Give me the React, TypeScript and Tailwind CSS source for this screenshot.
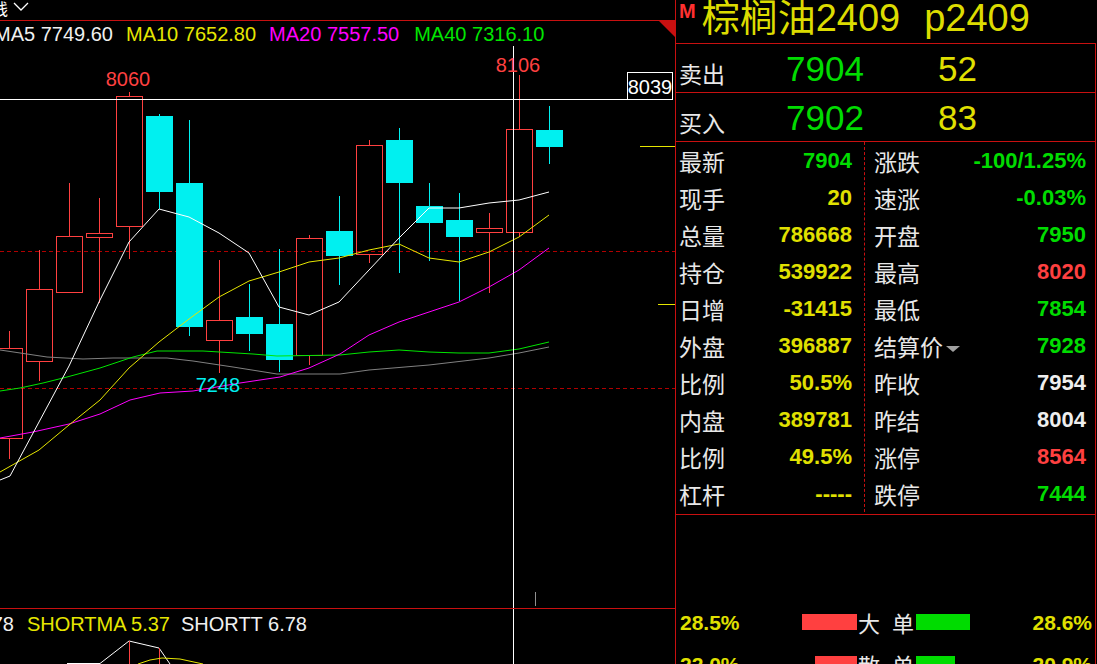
import React from 'react';

type Candle = { x: number; t: number; b: number; h: number; l: number; up: boolean };

const candles: Candle[] = [
  { x: 9, t: 348, b: 438, h: 331, l: 459, up: true },
  { x: 39, t: 289, b: 361, h: 250, l: 381, up: true },
  { x: 69, t: 236, b: 292, h: 183, l: 293, up: true },
  { x: 99, t: 233, b: 237, h: 198, l: 303, up: true },
  { x: 129, t: 96, b: 226, h: 92, l: 259, up: true },
  { x: 159, t: 116, b: 192, h: 114, l: 209, up: false },
  { x: 189, t: 183, b: 327, h: 120, l: 336, up: false },
  { x: 219, t: 320, b: 340, h: 260, l: 373, up: true },
  { x: 249, t: 317, b: 334, h: 284, l: 351, up: false },
  { x: 279, t: 324, b: 360, h: 249, l: 372, up: false },
  { x: 309, t: 238, b: 355, h: 235, l: 365, up: true },
  { x: 339, t: 231, b: 256, h: 196, l: 285, up: false },
  { x: 369, t: 145, b: 254, h: 140, l: 263, up: true },
  { x: 399, t: 140, b: 183, h: 128, l: 273, up: false },
  { x: 429, t: 206, b: 223, h: 183, l: 261, up: false },
  { x: 459, t: 220, b: 237, h: 193, l: 301, up: false },
  { x: 489, t: 228, b: 232, h: 213, l: 293, up: true },
  { x: 519, t: 129, b: 232, h: 75, l: 237, up: true },
  { x: 549, t: 130, b: 147, h: 106, l: 164, up: false },
];

const maLines = [
  { color: '#808080', pts: '0,350 27,354 47,357 83,359 113,358 167,358 193,361 233,367 277,374 340,374 369,370 429,365 489,358 519,353 549,347' },
  { color: '#00e600', pts: '0,391 20,388 43,383 67,377 100,368 133,357 157,351 203,351 253,354 277,356 340,355 369,352 399,350 429,352 459,353 489,353 519,349 549,342' },
  { color: '#ff00ff', pts: '0,438 33,432 69,424 100,414 130,400 160,393 193,391 240,383 280,377 309,368 340,354 369,335 399,322 429,312 459,302 489,287 519,270 549,248' },
  { color: '#e6e600', pts: '0,472 39,450 69,425 100,400 129,368 159,342 189,319 219,297 249,281 279,272 309,262 339,258 369,250 399,244 429,258 459,262 489,252 519,237 549,215' },
  { color: '#ffffff', pts: '0,480 10,476 39,422 69,366 99,302 129,242 159,209 189,217 219,233 249,253 279,307 309,315 339,302 369,270 399,238 429,208 459,208 489,203 519,200 549,192' },
];

const RED = '#ff4040';
const CYAN = '#00f0f0';
const FONT = 'Liberation Sans, Arial, sans-serif';

const tone = {
  g: 'text-[#00dc00]',
  y: 'text-[#e0e000]',
  r: 'text-[#ff4040]',
  w: 'text-[#eeeeee]',
};

type Row = { label: string; value: string; c: keyof typeof tone; arrow?: boolean };

const leftRows: Row[] = [
  { label: '最新', value: '7904', c: 'g' },
  { label: '现手', value: '20', c: 'y' },
  { label: '总量', value: '786668', c: 'y' },
  { label: '持仓', value: '539922', c: 'y' },
  { label: '日增', value: '-31415', c: 'y' },
  { label: '外盘', value: '396887', c: 'y' },
  { label: '比例', value: '50.5%', c: 'y' },
  { label: '内盘', value: '389781', c: 'y' },
  { label: '比例', value: '49.5%', c: 'y' },
  { label: '杠杆', value: '-----', c: 'y' },
];

const rightRows: Row[] = [
  { label: '涨跌', value: '-100/1.25%', c: 'g' },
  { label: '速涨', value: '-0.03%', c: 'g' },
  { label: '开盘', value: '7950', c: 'g' },
  { label: '最高', value: '8020', c: 'r' },
  { label: '最低', value: '7854', c: 'g' },
  { label: '结算价', value: '7928', c: 'g', arrow: true },
  { label: '昨收', value: '7954', c: 'w' },
  { label: '昨结', value: '8004', c: 'w' },
  { label: '涨停', value: '8564', c: 'r' },
  { label: '跌停', value: '7444', c: 'g' },
];

const flows = [
  { left: '28.5%', right: '28.6%', label: ['大', '单'], red: 55, green: 54 },
  { left: '22.0%', right: '20.9%', label: ['散', '单'], red: 42, green: 39 },
];

function CandleChart() {
  return (
    <svg width={675} height={587} viewBox="0 21 675 587" className="block">
      <line x1={0} y1={251.5} x2={675} y2={251.5} stroke="#b00000" strokeDasharray="4 3" />
      <line x1={0} y1={388.5} x2={675} y2={388.5} stroke="#b00000" strokeDasharray="4 3" />
      <line x1={640} y1={146.5} x2={675} y2={146.5} stroke="#e6e600" />
      <line x1={658} y1={304.5} x2={675} y2={304.5} stroke="#e6e600" />
      {candles.map((c) =>
        c.up ? (
          <g key={c.x} stroke={RED} shapeRendering="crispEdges">
            <line x1={c.x + 0.5} y1={c.h} x2={c.x + 0.5} y2={c.t} />
            <line x1={c.x + 0.5} y1={c.b} x2={c.x + 0.5} y2={c.l} />
            <rect x={c.x - 12.5} y={c.t + 0.5} width={26} height={Math.max(c.b - c.t, 2)} fill="none" />
          </g>
        ) : (
          <g key={c.x} shapeRendering="crispEdges">
            <line x1={c.x + 0.5} y1={c.h} x2={c.x + 0.5} y2={c.l} stroke={CYAN} />
            <rect x={c.x - 13} y={c.t} width={27} height={c.b - c.t} fill={CYAN} />
          </g>
        )
      )}
      {maLines.map((m) => (
        <polyline key={m.color} points={m.pts} fill="none" stroke={m.color} strokeWidth={1} />
      ))}
      <line x1={513.5} y1={46} x2={513.5} y2={608} stroke="#ffffff" />
      <line x1={0} y1={99.5} x2={627} y2={99.5} stroke="#ffffff" />
      <rect x={627.5} y={72.5} width={45} height={27} fill="#000" stroke="#ffffff" />
      <text x={650} y={94} fill="#ffffff" fontSize={20} fontFamily={FONT} textAnchor="middle">
        8039
      </text>
      <text x={128} y={86} fill={RED} fontSize={20} fontFamily={FONT} textAnchor="middle">
        8060
      </text>
      <text x={518} y={72} fill={RED} fontSize={20} fontFamily={FONT} textAnchor="middle">
        8106
      </text>
      <text x={218} y={392} fill={CYAN} fontSize={20} fontFamily={FONT} textAnchor="middle">
        7248
      </text>
      <polygon points="659,21 675,21 675,37" fill="#c81010" />
      <line x1={535.5} y1={592} x2={535.5} y2={606} stroke="#909090" />
    </svg>
  );
}

function IndicatorLines() {
  return (
    <svg width={675} height={55} viewBox="0 609 675 55" className="absolute inset-0">
      <line x1={513.5} y1={609} x2={513.5} y2={664} stroke="#ffffff" />
      <polyline points="67,663.5 100,663.5 129,641 159,648 170,664" fill="none" stroke="#ffffff" />
      <line x1={129.5} y1={641} x2={129.5} y2={664} stroke={RED} />
      <line x1={159.5} y1={648} x2={159.5} y2={664} stroke={RED} />
      <polyline points="138,664 150,660 162,658 180,659 203,664" fill="none" stroke="#e6e600" />
    </svg>
  );
}

function InfoRow({ row, first }: { row: Row; first?: boolean }) {
  return (
    <div className={`flex h-[37px] items-center justify-between ${first ? 'pl-[3px] pr-[12px]' : 'pl-[9px] pr-[9px]'}`}>
      <span className="flex items-center pt-[2px] font-['Noto_Sans_CJK_SC',sans-serif] text-[23px] leading-[23px] text-[#e8e8e8]">
        {row.label}
        {row.arrow && (
          <svg width={16} height={8} viewBox="0 0 16 8" className="ml-[2px] mt-[4px]">
            <polygon points="1,1 15,1 8,7" fill="#a0a0a0" />
          </svg>
        )}
      </span>
      <span className={`font-['Liberation_Sans',Arial,sans-serif] text-[22px] font-bold leading-[22px] ${tone[row.c]}`}>
        {row.value}
      </span>
    </div>
  );
}

export default function App() {
  return (
    <div className="flex h-[664px] w-[1097px] overflow-hidden bg-black font-['Liberation_Sans',Arial,sans-serif]">
      {/* chart side */}
      <div className="flex w-[676px] shrink-0 flex-col overflow-hidden border-r border-[#c81010]">
        <div className="flex h-[21px] shrink-0 items-start border-b border-[#c81010]">
          <span className="ml-[-8px] font-['Noto_Sans_CJK_SC',sans-serif] text-[16px] leading-[16px] text-white">线</span>
          <svg width={16} height={10} viewBox="0 0 16 10" className="ml-[5px] mt-[2px]">
            <polyline points="1,1 8,8 15,1" fill="none" stroke="#ffffff" strokeWidth={1.3} />
          </svg>
        </div>

        <div className="relative h-[587px] shrink-0">
          <CandleChart />
          <div className="absolute left-[-6px] top-[3px] flex gap-[13px] whitespace-nowrap text-[20px] leading-[20px]">
            <span className="text-[#f0f0f0]">MA5 7749.60</span>
            <span className="text-[#e6e600]">MA10 7652.80</span>
            <span className="text-[#ff00ff]">MA20 7557.50</span>
            <span className="ml-[2px] text-[#00e600]">MA40 7316.10</span>
          </div>
        </div>

        <div className="relative flex-1 border-t border-[#c81010]">
          <IndicatorLines />
          <div className="relative flex whitespace-nowrap pt-[5px] text-[20px] leading-[20px]">
            <span className="ml-[-25px] text-[#f0f0f0]">6.78</span>
            <span className="ml-[13px] text-[#e6e600]">SHORTMA 5.37</span>
            <span className="ml-[11px] text-[#f0f0f0]">SHORTT 6.78</span>
          </div>
        </div>
      </div>

      {/* quote side */}
      <div className="flex w-[421px] flex-col">
        <div className="flex h-[43px] shrink-0 items-start whitespace-nowrap font-['Liberation_Sans','Noto_Sans_CJK_SC',sans-serif] text-[#dcdc00]">
          <span className="ml-[3px] mt-[1px] text-[20px] font-bold leading-[20px] text-[#ff3030]">M</span>
          <span className="ml-[6px] mt-[-2px] text-[38px] leading-[40px]">棕榈油2409</span>
          <span className="ml-[24px] mt-[-2px] text-[38px] leading-[40px]">p2409</span>
        </div>

        <div className="flex w-[420px] flex-1 flex-col border-r border-t border-[#c81010]">
          <div className="flex h-[48px] items-center">
            <span className="w-[110px] pl-[3px] pt-[10px] font-['Noto_Sans_CJK_SC',sans-serif] text-[23px] leading-[23px] text-[#e8e8e8]">卖出</span>
            <span className="w-[152px] text-[35px] leading-[35px] text-[#00dc00]">7904</span>
            <span className="text-[35px] leading-[35px] text-[#e0e000]">52</span>
          </div>
          <div className="flex h-[49px] items-center border-t border-[#c81010]">
            <span className="w-[110px] pl-[3px] pt-[10px] font-['Noto_Sans_CJK_SC',sans-serif] text-[23px] leading-[23px] text-[#e8e8e8]">买入</span>
            <span className="w-[152px] text-[35px] leading-[35px] text-[#00dc00]">7902</span>
            <span className="text-[35px] leading-[35px] text-[#e0e000]">83</span>
          </div>

          <div className="flex h-[374px] border-y border-[#c81010] pb-[2px]">
            <div className="w-[189px] border-r border-dashed border-[#c81010]">
              {leftRows.map((r, i) => (
                <InfoRow key={i} row={r} first />
              ))}
            </div>
            <div className="flex-1">
              {rightRows.map((r, i) => (
                <InfoRow key={i} row={r} />
              ))}
            </div>
          </div>

          <div className="flex flex-col pt-[86px]">
            {flows.map((f) => (
              <div key={f.left} className="flex h-[42px] items-center">
                <div className="flex w-[181px] items-center justify-between pl-[4px]">
                  <span className="text-[21px] font-bold leading-[21px] text-[#e0e000]">{f.left}</span>
                  <div className="h-[16px] bg-[#ff4040]" style={{ width: f.red }} />
                </div>
                <div className="flex w-[59px] gap-[12px] pl-[1px] font-['Noto_Sans_CJK_SC',sans-serif] text-[22px] leading-[22px] text-[#e8e8e8]">
                  <span>{f.label[0]}</span>
                  <span>{f.label[1]}</span>
                </div>
                <div className="flex flex-1 items-center justify-between pr-[3px]">
                  <div className="h-[16px] bg-[#00dc00]" style={{ width: f.green }} />
                  <span className="text-[21px] font-bold leading-[21px] text-[#e0e000]">{f.right}</span>
                </div>
              </div>
            ))}
          </div>
        </div>
      </div>
    </div>
  );
}
